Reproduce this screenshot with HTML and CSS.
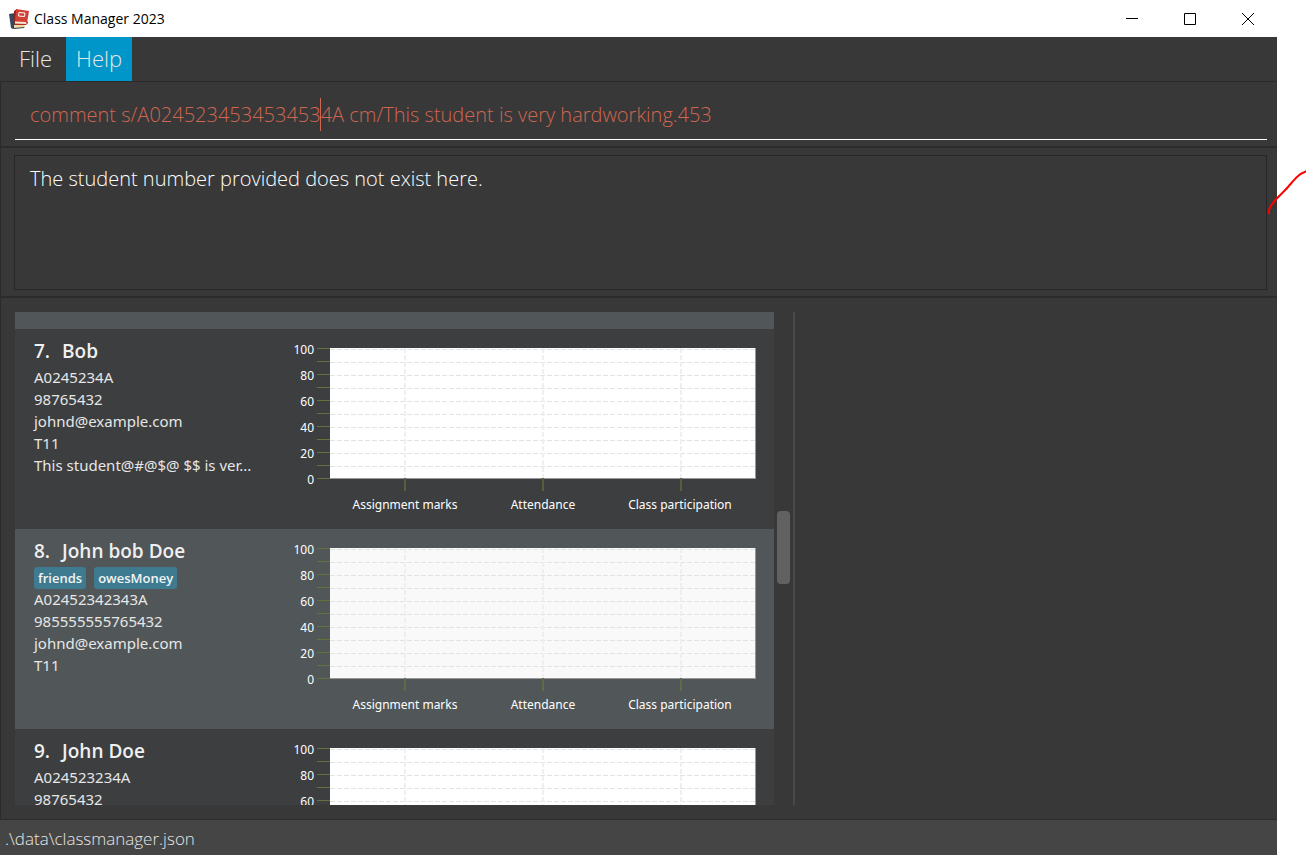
FILE: index.html
```html
<!DOCTYPE html>
<html lang="en">
<head>
<meta charset="utf-8">
<title>Class Manager 2023</title>
<link rel="stylesheet" href="styles.css">
</head>
<body>
<svg class="defs" aria-hidden="true">
  <symbol id="plot" viewBox="0 0 480 200">
    <rect class="plot-bg" x="46" y="19" width="425" height="131"/>
    <path class="grid" d="M46 20.500h425M46 33.500h425M46 46.500h425M46 59.500h425M46 72.500h425M46 85.500h425M46 98.500h425M46 111.500h425M46 124.500h425M46 137.500h425"/>
    <path class="grid grid-v" d="M121 150V19M259 150V19M397 150V19"/>
    <path class="frame" d="M46 149.500h426M471.500 19v131"/>
    <path class="tick" d="M33 19.500h13M33 32.500h13M33 45.500h13M33 58.500h13M33 71.500h13M33 84.500h13M33 97.500h13M33 110.500h13M33 123.500h13M33 136.500h13M33 149.500h13"/>
    <path class="tick tick-v" d="M121 149v13M259 149v13M397 149v13"/>
  </symbol>
</svg>
<div class="window">
  <header class="titlebar">
    <svg class="app-icon" viewBox="0 0 20 20" aria-hidden="true">
      <path fill="#34495e" d="M0 5l6-1 2 12 4 1-8 3-2-1z"/>
      <path fill="#2b3a4a" d="M4 18l12-1-1 2-10 1z"/>
      <path fill="#f0d9a0" d="M5 16l10 0 1 2-11 1z"/>
      <path fill="#8f201b" d="M5 2l3-2-2 13-1 1z"/>
      <path fill="#d13f35" d="M7 0l13 2-2 12-12-1z"/>
      <path fill="#f6ead0" d="M6 12.500l11 .5v2H6z"/>
      <path fill="#b32b25" d="M5 14.500l12 .5 2-3v2l-2 2H6z"/>
      <path fill="none" stroke="#fff" d="M10 3.500l6 .5-.5 3.500-6-.5z"/>
    </svg>
    <h1 class="app-title">Class Manager 2023</h1>
    <div class="window-buttons">
      <button class="win-btn" aria-label="Minimize"><svg viewBox="0 0 12 12"><path d="M0 5.500h12"/></svg></button>
      <button class="win-btn" aria-label="Maximize"><svg viewBox="0 0 12 12"><path d="M.5.500h11v11H.5z"/></svg></button>
      <button class="win-btn" aria-label="Close"><svg viewBox="0 0 12 12"><path d="M0 0l12 12M12 0L0 12"/></svg></button>
    </div>
  </header>
  <nav class="menubar">
    <button class="menu">File</button>
    <button class="menu menu-active">Help</button>
  </nav>
  <section class="pane command-pane">
    <input class="command" type="text" aria-label="Command" spellcheck="false" value="comment s/A0245234534534534A cm/This student is very hardworking.453">
    <span class="caret"></span>
  </section>
  <section class="pane result-pane">
    <output class="result">The student number provided does not exist here.</output>
  </section>
  <main class="pane main-pane">
    <ul class="students">
      <li class="card card-even card-cut"></li>
      <li class="card">
        <div class="info">
          <h2 class="name"><span>7.</span><span>Bob</span></h2>
          <p class="detail">A0245234A</p>
          <p class="detail">98765432</p>
          <p class="detail">johnd@example.com</p>
          <p class="detail">T11</p>
          <p class="detail">This student@#@$@ $$ is ver...</p>
        </div>
        <svg class="chart" viewBox="0 0 480 200" role="img" aria-label="Scores of Bob">
          <use href="#plot"/>
          <g class="axis-y"><text x="30" y="25">100</text><text x="30" y="51">80</text><text x="30" y="77">60</text><text x="30" y="103">40</text><text x="30" y="129">20</text><text x="30" y="155">0</text></g>
          <g class="axis-x"><text x="121" y="180">Assignment marks</text><text x="259" y="180">Attendance</text><text x="396" y="180">Class participation</text></g>
        </svg>
      </li>
      <li class="card card-even">
        <div class="info">
          <h2 class="name"><span>8.</span><span>John bob Doe</span></h2>
          <div class="tags"><span class="tag">friends</span><span class="tag">owesMoney</span></div>
          <p class="detail">A02452342343A</p>
          <p class="detail">985555555765432</p>
          <p class="detail">johnd@example.com</p>
          <p class="detail">T11</p>
        </div>
        <svg class="chart" viewBox="0 0 480 200" role="img" aria-label="Scores of John bob Doe">
          <use href="#plot"/>
          <g class="axis-y"><text x="30" y="25">100</text><text x="30" y="51">80</text><text x="30" y="77">60</text><text x="30" y="103">40</text><text x="30" y="129">20</text><text x="30" y="155">0</text></g>
          <g class="axis-x"><text x="121" y="180">Assignment marks</text><text x="259" y="180">Attendance</text><text x="396" y="180">Class participation</text></g>
        </svg>
      </li>
      <li class="card">
        <div class="info">
          <h2 class="name"><span>9.</span><span>John Doe</span></h2>
          <p class="detail">A024523234A</p>
          <p class="detail">98765432</p>
        </div>
        <svg class="chart" viewBox="0 0 480 200" role="img" aria-label="Scores of John Doe">
          <use href="#plot"/>
          <g class="axis-y"><text x="30" y="25">100</text><text x="30" y="51">80</text><text x="30" y="77">60</text></g>
        </svg>
      </li>
    </ul>
    <div class="scrollbar"><div class="thumb"></div></div>
    <div class="side"></div>
  </main>
  <footer class="status">.\data\classmanager.json</footer>
</div>
<svg class="pen" viewBox="0 0 40 46" aria-hidden="true"><path d="M3 44v-4c2-8 12-15 19-23 6-7 10-13 19-16"/></svg>
</body>
</html>
```
FILE: styles.css
```css
* { box-sizing: border-box; }
body {
  position: relative;
  margin: 0;
  padding-right: 29px;
  background: #fff;
  font-family: "Open Sans", "Noto Sans", sans-serif;
  overflow: hidden;
}
button { border: 0; background: none; padding: 0; font: inherit; color: inherit; }
h1, h2, p, ul { margin: 0; padding: 0; font-weight: 400; }
.defs { position: absolute; width: 0; height: 0; }
.window { display: flex; flex-direction: column; height: 100vh; background: #383838; color: #e6e6e6; }

.titlebar { display: flex; align-items: center; height: 37px; flex: none; padding-left: 9px; background: #fff; color: #000; }
.app-icon { width: 20px; height: 20px; margin-right: 5px; }
.app-title { font-size: 14px; line-height: 20px; }
.window-buttons { display: flex; margin-left: auto; }
.win-btn { display: flex; align-items: center; justify-content: center; width: 58px; height: 37px; }
.win-btn svg { width: 12px; height: 12px; fill: none; stroke: #000; }

.menubar { display: flex; flex: none; height: 44px; padding-left: 9px; }
.menu { padding: 0 10px 2px; font-size: 22px; font-weight: 300; color: #e6e6e6; }
.menu + .menu { margin-left: 4px; }
.menu-active { background: #0096c9; }

.pane { border: 1px solid #2b2b2b; border-right: 0; flex: none; }
.command-pane { position: relative; height: 66px; padding: 8px 10px 6px 14px; }
.command {
  display: block; width: 100%; height: 50px; padding: 0 15px; outline: 0;
  border: 0; border-bottom: 1px solid #fff; background: transparent;
  font-family: inherit; font-size: 20px; font-weight: 300; color: #d06651;
}
.caret { position: absolute; left: 319px; top: 16px; width: 1px; height: 33px; background: #d06651; }
.result-pane { display: flex; height: 150px; padding: 7px 10px 6px 13px; }
.result { flex: 1; padding: 7px 15px; border: 1px solid #272727; font-size: 20px; line-height: 32px; font-weight: 300; color: #fff; }
.main-pane { display: flex; flex: 1; min-height: 0; padding: 14px 10px 14px 14px; }

.students { flex: 759; overflow: hidden; list-style: none; }
.card { display: flex; justify-content: space-between; height: 200px; padding-left: 19px; background: #3c3e3f; }
.card-even { background: #515658; }
.card-cut { height: 17px; }
.info { padding-top: 8px; white-space: nowrap; }
.name { display: flex; gap: 12px; font-size: 19px; line-height: 28px; font-weight: 600; color: #f0f0f0; }
.detail { font-family: "Noto Sans", "Open Sans", sans-serif; font-size: 15px; line-height: 22px; color: #e6e6e6; }
.name + .detail { margin-top: 1px; }
.tags { display: flex; gap: 8px; padding-top: 2px; }
.tag { padding: 0 4px; border-radius: 3px; background: #3e7b91; font-size: 13px; line-height: 22px; font-weight: 600; color: #f4f4f4; }
.tags + .detail { margin-top: -1px; }
.chart { flex: none; width: 480px; height: 200px; margin-right: 10px; margin-left: -10px; }
.plot-bg { fill: var(--plot, #fff); }
.card-even .chart { --plot: #f9f9f9; --tick-v: #5f6b44; }
.grid { fill: none; stroke: #e3e3e3; stroke-dasharray: 5 2; }
.grid-v { stroke: #efefef; stroke-width: 2; }
.frame { fill: none; stroke: #979797; }
.tick { fill: none; stroke: #65703a; }
.tick-v { stroke: var(--tick-v, #565f3b); stroke-width: 2; }
.chart text { font-family: "Noto Sans", "Open Sans", sans-serif; font-size: 12px; fill: #fff; }
.axis-y { text-anchor: end; }
.axis-x { text-anchor: middle; }

.scrollbar { display: flex; flex-direction: column; align-items: center; flex: none; width: 19px; padding-top: 199px; }
.thumb { width: 13px; height: 73px; border-radius: 4px; background: #616161; }
.side { flex: 472; border-left: 2px solid #494949; }
.status { flex: none; height: 35px; padding-left: 5px; background: #454545; font-size: 17px; line-height: 37px; font-weight: 300; }
.pen { position: absolute; right: 0; top: 170px; width: 40px; height: 46px; fill: none; stroke: #f00; stroke-width: 2; }
```
